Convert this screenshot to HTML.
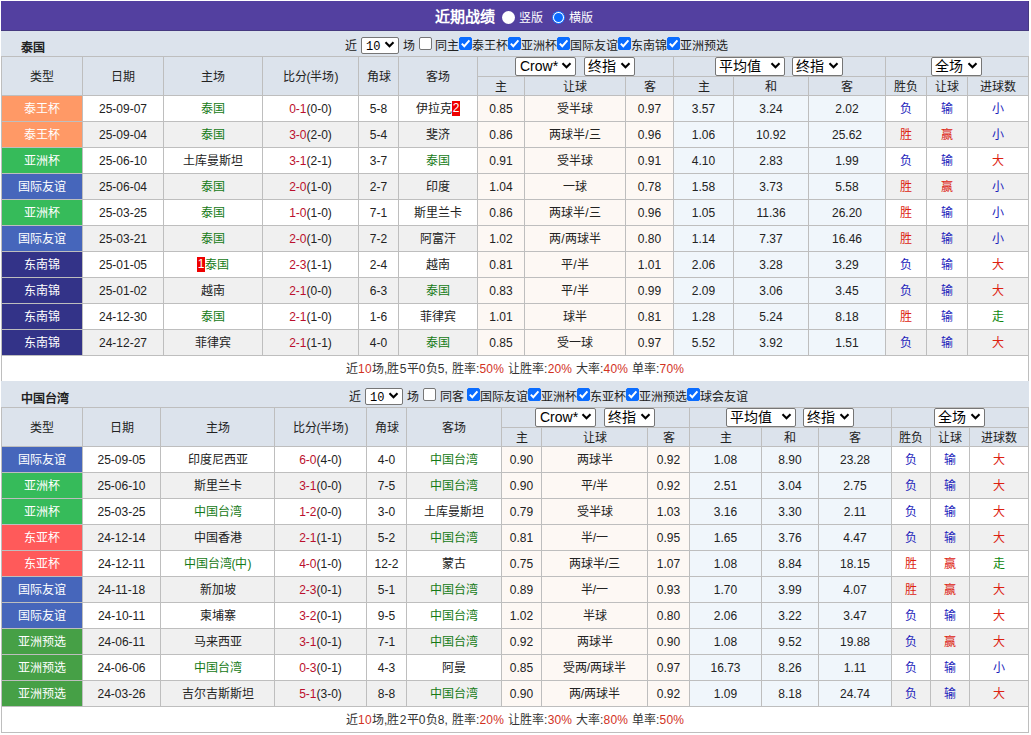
<!DOCTYPE html>
<html lang="zh-CN"><head><meta charset="utf-8"><style>
html,body{margin:0;padding:0;background:#fff;}
body{width:1031px;height:735px;position:relative;overflow:hidden;font-family:"Liberation Sans", sans-serif;font-size:12px;color:#222;}
body>div{position:absolute;box-sizing:border-box;}
.t{text-align:center;white-space:nowrap;overflow:visible;}
.sel{background:#fff;border:1px solid #767676;border-radius:2px;color:#000;white-space:nowrap;}
.cb{width:13px;height:13px;box-sizing:border-box;border:1px solid #767676;border-radius:2px;background:#fff;}
.cb.on{background:#0a6cff;border-color:#0a6cff;}
.cb svg{position:absolute;left:-1px;top:-1px;}
.rad{width:13px;height:13px;border-radius:50%;background:#fff;box-sizing:border-box;}
.rad.on{background:#fff;border:1px solid #0a6cff;}
.rad.on div{position:absolute;left:1px;top:1px;width:9px;height:9px;border-radius:50%;background:#0a6cff;}
.bd{display:inline-block;vertical-align:top;margin-top:4px;height:15px;line-height:15px;background:#e00;color:#fff;padding:0 0.5px;}
</style></head><body>
<div style="left:1px;top:1px;width:1028px;height:30px;background:#5340a0;border-right:1px solid #463a80;border-bottom:1px solid #463a80;"></div><div class="t" style="left:435px;top:2px;width:70px;height:30px;line-height:30px;color:#fff;font-weight:bold;font-size:15px;text-align:left;">近期战绩</div><div class="rad" style="left:502px;top:11px;width:13px;height:13px;"></div><div class="t" style="left:519px;top:3px;width:30px;height:30px;line-height:30px;color:#fff;font-size:12px;text-align:left;">竖版</div><div class="rad on" style="left:552px;top:11px;"><div></div></div><div class="t" style="left:569px;top:3px;width:30px;height:30px;line-height:30px;color:#fff;font-size:12px;text-align:left;">横版</div><div style="left:1px;top:31px;width:1028px;height:1px;background:#e6e6fa;"></div><div style="left:1px;top:31px;width:1028px;height:25px;background:#dce3ec;"></div><div class="t" style="left:21px;top:36px;width:80px;height:25px;line-height:25px;font-weight:bold;text-align:left;color:#222;">泰国</div><div class="t" style="left:345px;top:38px;width:14px;height:16px;line-height:16px;text-align:left;line-height:17px;">近</div><div class="sel" style="left:361px;top:37px;width:38px;height:17px;"><span style="position:absolute;left:4px;top:2px;font-family:'Liberation Mono', monospace;font-size:12px;line-height:15px;">10</span><svg style="position:absolute;right:3px;top:3px" width="11" height="7" viewBox="0 0 11 7"><path d="M1.5 1.3 L5.5 5.3 L9.5 1.3" fill="none" stroke="#000" stroke-width="2.1"/></svg></div><div class="t" style="left:403px;top:38px;width:14px;height:16px;line-height:16px;text-align:left;line-height:17px;">场</div><div class="cb" style="left:419px;top:37px;"></div><div class="t" style="left:435px;top:38px;width:26px;height:16px;line-height:16px;text-align:left;line-height:17px;">同主</div><div class="cb on" style="left:459px;top:37px;"><svg width="13" height="13" viewBox="0 0 13 13"><path d="M2.8 6.6 L5.3 9.2 L10.4 3.4" fill="none" stroke="#fff" stroke-width="2"/></svg></div><div class="t" style="left:472px;top:38px;width:38px;height:16px;line-height:16px;text-align:left;line-height:17px;">泰王杯</div><div class="cb on" style="left:508px;top:37px;"><svg width="13" height="13" viewBox="0 0 13 13"><path d="M2.8 6.6 L5.3 9.2 L10.4 3.4" fill="none" stroke="#fff" stroke-width="2"/></svg></div><div class="t" style="left:521px;top:38px;width:38px;height:16px;line-height:16px;text-align:left;line-height:17px;">亚洲杯</div><div class="cb on" style="left:557px;top:37px;"><svg width="13" height="13" viewBox="0 0 13 13"><path d="M2.8 6.6 L5.3 9.2 L10.4 3.4" fill="none" stroke="#fff" stroke-width="2"/></svg></div><div class="t" style="left:570px;top:38px;width:50px;height:16px;line-height:16px;text-align:left;line-height:17px;">国际友谊</div><div class="cb on" style="left:618px;top:37px;"><svg width="13" height="13" viewBox="0 0 13 13"><path d="M2.8 6.6 L5.3 9.2 L10.4 3.4" fill="none" stroke="#fff" stroke-width="2"/></svg></div><div class="t" style="left:631px;top:38px;width:38px;height:16px;line-height:16px;text-align:left;line-height:17px;">东南锦</div><div class="cb on" style="left:667px;top:37px;"><svg width="13" height="13" viewBox="0 0 13 13"><path d="M2.8 6.6 L5.3 9.2 L10.4 3.4" fill="none" stroke="#fff" stroke-width="2"/></svg></div><div class="t" style="left:680px;top:38px;width:50px;height:16px;line-height:16px;text-align:left;line-height:17px;">亚洲预选</div><div style="left:1px;top:56px;width:1028px;height:39px;background:#dce3ec;"></div><div style="left:1px;top:56px;width:1028px;height:1px;background:#bebebe;"></div><div style="left:477px;top:76px;width:551px;height:1px;background:#bebebe;"></div><div style="left:1px;top:95px;width:1028px;height:1px;background:#bebebe;"></div><div class="t" style="left:2px;top:58px;width:80px;height:38px;line-height:38px;">类型</div><div class="t" style="left:83px;top:58px;width:80px;height:38px;line-height:38px;">日期</div><div class="t" style="left:164px;top:58px;width:98px;height:38px;line-height:38px;">主场</div><div class="t" style="left:263px;top:58px;width:95px;height:38px;line-height:38px;">比分(半场)</div><div class="t" style="left:359px;top:58px;width:39px;height:38px;line-height:38px;">角球</div><div class="t" style="left:399px;top:58px;width:78px;height:38px;line-height:38px;">客场</div><div class="t" style="left:478px;top:78px;width:46px;height:18px;line-height:18px;">主</div><div class="t" style="left:525px;top:78px;width:100px;height:18px;line-height:18px;">让球</div><div class="t" style="left:626px;top:78px;width:47px;height:18px;line-height:18px;">客</div><div class="t" style="left:674px;top:78px;width:59px;height:18px;line-height:18px;">主</div><div class="t" style="left:734px;top:78px;width:74px;height:18px;line-height:18px;">和</div><div class="t" style="left:809px;top:78px;width:76px;height:18px;line-height:18px;">客</div><div class="t" style="left:886px;top:78px;width:40px;height:18px;line-height:18px;">胜负</div><div class="t" style="left:927px;top:78px;width:40px;height:18px;line-height:18px;">让球</div><div class="t" style="left:968px;top:78px;width:60px;height:18px;line-height:18px;">进球数</div><div style="left:1px;top:56px;width:1px;height:39px;background:#bebebe;"></div><div style="left:82px;top:56px;width:1px;height:39px;background:#bebebe;"></div><div style="left:163px;top:56px;width:1px;height:39px;background:#bebebe;"></div><div style="left:262px;top:56px;width:1px;height:39px;background:#bebebe;"></div><div style="left:358px;top:56px;width:1px;height:39px;background:#bebebe;"></div><div style="left:398px;top:56px;width:1px;height:39px;background:#bebebe;"></div><div style="left:477px;top:56px;width:1px;height:39px;background:#bebebe;"></div><div style="left:673px;top:56px;width:1px;height:39px;background:#bebebe;"></div><div style="left:885px;top:56px;width:1px;height:39px;background:#bebebe;"></div><div style="left:1028px;top:56px;width:1px;height:39px;background:#bebebe;"></div><div style="left:524px;top:76px;width:1px;height:19px;background:#bebebe;"></div><div style="left:625px;top:76px;width:1px;height:19px;background:#bebebe;"></div><div style="left:733px;top:76px;width:1px;height:19px;background:#bebebe;"></div><div style="left:808px;top:76px;width:1px;height:19px;background:#bebebe;"></div><div style="left:926px;top:76px;width:1px;height:19px;background:#bebebe;"></div><div style="left:967px;top:76px;width:1px;height:19px;background:#bebebe;"></div><div class="sel" style="left:515px;top:57px;width:61px;height:19px;"><span style="position:absolute;left:4px;top:0px;font-family:'Liberation Sans', sans-serif;font-size:14px;line-height:17px;">Crow*</span><svg style="position:absolute;right:3px;top:4px" width="11" height="7" viewBox="0 0 11 7"><path d="M1.5 1.3 L5.5 5.3 L9.5 1.3" fill="none" stroke="#000" stroke-width="2.1"/></svg></div><div class="sel" style="left:584px;top:57px;width:51px;height:19px;"><span style="position:absolute;left:3px;top:0px;font-family:'Liberation Sans', sans-serif;font-size:14px;line-height:17px;">终指</span><svg style="position:absolute;right:3px;top:4px" width="11" height="7" viewBox="0 0 11 7"><path d="M1.5 1.3 L5.5 5.3 L9.5 1.3" fill="none" stroke="#000" stroke-width="2.1"/></svg></div><div class="sel" style="left:715px;top:57px;width:70px;height:19px;"><span style="position:absolute;left:3px;top:0px;font-family:'Liberation Sans', sans-serif;font-size:14px;line-height:17px;">平均值</span><svg style="position:absolute;right:3px;top:4px" width="11" height="7" viewBox="0 0 11 7"><path d="M1.5 1.3 L5.5 5.3 L9.5 1.3" fill="none" stroke="#000" stroke-width="2.1"/></svg></div><div class="sel" style="left:792px;top:57px;width:51px;height:19px;"><span style="position:absolute;left:3px;top:0px;font-family:'Liberation Sans', sans-serif;font-size:14px;line-height:17px;">终指</span><svg style="position:absolute;right:3px;top:4px" width="11" height="7" viewBox="0 0 11 7"><path d="M1.5 1.3 L5.5 5.3 L9.5 1.3" fill="none" stroke="#000" stroke-width="2.1"/></svg></div><div class="sel" style="left:931px;top:57px;width:51px;height:19px;"><span style="position:absolute;left:3px;top:0px;font-family:'Liberation Sans', sans-serif;font-size:14px;line-height:17px;">全场</span><svg style="position:absolute;right:3px;top:4px" width="11" height="7" viewBox="0 0 11 7"><path d="M1.5 1.3 L5.5 5.3 L9.5 1.3" fill="none" stroke="#000" stroke-width="2.1"/></svg></div><div style="left:1px;top:96px;width:1028px;height:25px;background:#fff;"></div><div style="left:478px;top:96px;width:195px;height:25px;background:#fdf8f4;"></div><div style="left:674px;top:96px;width:211px;height:25px;background:#f0f6fb;"></div><div style="left:2px;top:96px;width:80px;height:25px;background:#ff9966;"></div><div class="t" style="left:2px;top:97px;width:80px;height:25px;line-height:25px;color:#fff;">泰王杯</div><div class="t" style="left:83px;top:97px;width:80px;height:25px;line-height:25px;">25-09-07</div><div class="t" style="left:164px;top:97px;width:98px;height:25px;line-height:25px;"><span style="color:#157a15">泰国</span></div><div class="t" style="left:263px;top:97px;width:95px;height:25px;line-height:25px;"><span style="color:#bb0f2d">0-1</span>(0-0)</div><div class="t" style="left:359px;top:97px;width:39px;height:25px;line-height:25px;">5-8</div><div class="t" style="left:399px;top:97px;width:78px;height:25px;line-height:25px;">伊拉克<span class="bd">2</span></div><div class="t" style="left:478px;top:97px;width:46px;height:25px;line-height:25px;">0.85</div><div class="t" style="left:525px;top:97px;width:100px;height:25px;line-height:25px;">受半球</div><div class="t" style="left:626px;top:97px;width:47px;height:25px;line-height:25px;">0.97</div><div class="t" style="left:674px;top:97px;width:59px;height:25px;line-height:25px;">3.57</div><div class="t" style="left:734px;top:97px;width:74px;height:25px;line-height:25px;">3.24</div><div class="t" style="left:809px;top:97px;width:76px;height:25px;line-height:25px;">2.02</div><div class="t" style="left:886px;top:97px;width:40px;height:25px;line-height:25px;"><span style="color:#1c1cbb">负</span></div><div class="t" style="left:927px;top:97px;width:40px;height:25px;line-height:25px;"><span style="color:#1c1cbb">输</span></div><div class="t" style="left:968px;top:97px;width:60px;height:25px;line-height:25px;"><span style="color:#1c1cbb">小</span></div><div style="left:1px;top:121px;width:1028px;height:1px;background:#bebebe;"></div><div style="left:1px;top:122px;width:1028px;height:25px;background:#f0f0f0;"></div><div style="left:478px;top:122px;width:195px;height:25px;background:#fdf8f4;"></div><div style="left:674px;top:122px;width:211px;height:25px;background:#f0f6fb;"></div><div style="left:2px;top:122px;width:80px;height:25px;background:#ff9966;"></div><div class="t" style="left:2px;top:123px;width:80px;height:25px;line-height:25px;color:#fff;">泰王杯</div><div class="t" style="left:83px;top:123px;width:80px;height:25px;line-height:25px;">25-09-04</div><div class="t" style="left:164px;top:123px;width:98px;height:25px;line-height:25px;"><span style="color:#157a15">泰国</span></div><div class="t" style="left:263px;top:123px;width:95px;height:25px;line-height:25px;"><span style="color:#bb0f2d">3-0</span>(2-0)</div><div class="t" style="left:359px;top:123px;width:39px;height:25px;line-height:25px;">5-4</div><div class="t" style="left:399px;top:123px;width:78px;height:25px;line-height:25px;">斐济</div><div class="t" style="left:478px;top:123px;width:46px;height:25px;line-height:25px;">0.86</div><div class="t" style="left:525px;top:123px;width:100px;height:25px;line-height:25px;">两球半/三</div><div class="t" style="left:626px;top:123px;width:47px;height:25px;line-height:25px;">0.96</div><div class="t" style="left:674px;top:123px;width:59px;height:25px;line-height:25px;">1.06</div><div class="t" style="left:734px;top:123px;width:74px;height:25px;line-height:25px;">10.92</div><div class="t" style="left:809px;top:123px;width:76px;height:25px;line-height:25px;">25.62</div><div class="t" style="left:886px;top:123px;width:40px;height:25px;line-height:25px;"><span style="color:#dd2211">胜</span></div><div class="t" style="left:927px;top:123px;width:40px;height:25px;line-height:25px;"><span style="color:#dd2211">赢</span></div><div class="t" style="left:968px;top:123px;width:60px;height:25px;line-height:25px;"><span style="color:#1c1cbb">小</span></div><div style="left:1px;top:147px;width:1028px;height:1px;background:#bebebe;"></div><div style="left:1px;top:148px;width:1028px;height:25px;background:#fff;"></div><div style="left:478px;top:148px;width:195px;height:25px;background:#fdf8f4;"></div><div style="left:674px;top:148px;width:211px;height:25px;background:#f0f6fb;"></div><div style="left:2px;top:148px;width:80px;height:25px;background:#36bb5a;"></div><div class="t" style="left:2px;top:149px;width:80px;height:25px;line-height:25px;color:#fff;">亚洲杯</div><div class="t" style="left:83px;top:149px;width:80px;height:25px;line-height:25px;">25-06-10</div><div class="t" style="left:164px;top:149px;width:98px;height:25px;line-height:25px;">土库曼斯坦</div><div class="t" style="left:263px;top:149px;width:95px;height:25px;line-height:25px;"><span style="color:#bb0f2d">3-1</span>(2-1)</div><div class="t" style="left:359px;top:149px;width:39px;height:25px;line-height:25px;">3-7</div><div class="t" style="left:399px;top:149px;width:78px;height:25px;line-height:25px;"><span style="color:#157a15">泰国</span></div><div class="t" style="left:478px;top:149px;width:46px;height:25px;line-height:25px;">0.91</div><div class="t" style="left:525px;top:149px;width:100px;height:25px;line-height:25px;">受半球</div><div class="t" style="left:626px;top:149px;width:47px;height:25px;line-height:25px;">0.91</div><div class="t" style="left:674px;top:149px;width:59px;height:25px;line-height:25px;">4.10</div><div class="t" style="left:734px;top:149px;width:74px;height:25px;line-height:25px;">2.83</div><div class="t" style="left:809px;top:149px;width:76px;height:25px;line-height:25px;">1.99</div><div class="t" style="left:886px;top:149px;width:40px;height:25px;line-height:25px;"><span style="color:#1c1cbb">负</span></div><div class="t" style="left:927px;top:149px;width:40px;height:25px;line-height:25px;"><span style="color:#1c1cbb">输</span></div><div class="t" style="left:968px;top:149px;width:60px;height:25px;line-height:25px;"><span style="color:#dd2211">大</span></div><div style="left:1px;top:173px;width:1028px;height:1px;background:#bebebe;"></div><div style="left:1px;top:174px;width:1028px;height:25px;background:#f0f0f0;"></div><div style="left:478px;top:174px;width:195px;height:25px;background:#fdf8f4;"></div><div style="left:674px;top:174px;width:211px;height:25px;background:#f0f6fb;"></div><div style="left:2px;top:174px;width:80px;height:25px;background:#4666bb;"></div><div class="t" style="left:2px;top:175px;width:80px;height:25px;line-height:25px;color:#fff;">国际友谊</div><div class="t" style="left:83px;top:175px;width:80px;height:25px;line-height:25px;">25-06-04</div><div class="t" style="left:164px;top:175px;width:98px;height:25px;line-height:25px;"><span style="color:#157a15">泰国</span></div><div class="t" style="left:263px;top:175px;width:95px;height:25px;line-height:25px;"><span style="color:#bb0f2d">2-0</span>(1-0)</div><div class="t" style="left:359px;top:175px;width:39px;height:25px;line-height:25px;">2-7</div><div class="t" style="left:399px;top:175px;width:78px;height:25px;line-height:25px;">印度</div><div class="t" style="left:478px;top:175px;width:46px;height:25px;line-height:25px;">1.04</div><div class="t" style="left:525px;top:175px;width:100px;height:25px;line-height:25px;">一球</div><div class="t" style="left:626px;top:175px;width:47px;height:25px;line-height:25px;">0.78</div><div class="t" style="left:674px;top:175px;width:59px;height:25px;line-height:25px;">1.58</div><div class="t" style="left:734px;top:175px;width:74px;height:25px;line-height:25px;">3.73</div><div class="t" style="left:809px;top:175px;width:76px;height:25px;line-height:25px;">5.58</div><div class="t" style="left:886px;top:175px;width:40px;height:25px;line-height:25px;"><span style="color:#dd2211">胜</span></div><div class="t" style="left:927px;top:175px;width:40px;height:25px;line-height:25px;"><span style="color:#dd2211">赢</span></div><div class="t" style="left:968px;top:175px;width:60px;height:25px;line-height:25px;"><span style="color:#1c1cbb">小</span></div><div style="left:1px;top:199px;width:1028px;height:1px;background:#bebebe;"></div><div style="left:1px;top:200px;width:1028px;height:25px;background:#fff;"></div><div style="left:478px;top:200px;width:195px;height:25px;background:#fdf8f4;"></div><div style="left:674px;top:200px;width:211px;height:25px;background:#f0f6fb;"></div><div style="left:2px;top:200px;width:80px;height:25px;background:#36bb5a;"></div><div class="t" style="left:2px;top:201px;width:80px;height:25px;line-height:25px;color:#fff;">亚洲杯</div><div class="t" style="left:83px;top:201px;width:80px;height:25px;line-height:25px;">25-03-25</div><div class="t" style="left:164px;top:201px;width:98px;height:25px;line-height:25px;"><span style="color:#157a15">泰国</span></div><div class="t" style="left:263px;top:201px;width:95px;height:25px;line-height:25px;"><span style="color:#bb0f2d">1-0</span>(1-0)</div><div class="t" style="left:359px;top:201px;width:39px;height:25px;line-height:25px;">7-1</div><div class="t" style="left:399px;top:201px;width:78px;height:25px;line-height:25px;">斯里兰卡</div><div class="t" style="left:478px;top:201px;width:46px;height:25px;line-height:25px;">0.86</div><div class="t" style="left:525px;top:201px;width:100px;height:25px;line-height:25px;">两球半/三</div><div class="t" style="left:626px;top:201px;width:47px;height:25px;line-height:25px;">0.96</div><div class="t" style="left:674px;top:201px;width:59px;height:25px;line-height:25px;">1.05</div><div class="t" style="left:734px;top:201px;width:74px;height:25px;line-height:25px;">11.36</div><div class="t" style="left:809px;top:201px;width:76px;height:25px;line-height:25px;">26.20</div><div class="t" style="left:886px;top:201px;width:40px;height:25px;line-height:25px;"><span style="color:#dd2211">胜</span></div><div class="t" style="left:927px;top:201px;width:40px;height:25px;line-height:25px;"><span style="color:#1c1cbb">输</span></div><div class="t" style="left:968px;top:201px;width:60px;height:25px;line-height:25px;"><span style="color:#1c1cbb">小</span></div><div style="left:1px;top:225px;width:1028px;height:1px;background:#bebebe;"></div><div style="left:1px;top:226px;width:1028px;height:25px;background:#f0f0f0;"></div><div style="left:478px;top:226px;width:195px;height:25px;background:#fdf8f4;"></div><div style="left:674px;top:226px;width:211px;height:25px;background:#f0f6fb;"></div><div style="left:2px;top:226px;width:80px;height:25px;background:#4666bb;"></div><div class="t" style="left:2px;top:227px;width:80px;height:25px;line-height:25px;color:#fff;">国际友谊</div><div class="t" style="left:83px;top:227px;width:80px;height:25px;line-height:25px;">25-03-21</div><div class="t" style="left:164px;top:227px;width:98px;height:25px;line-height:25px;"><span style="color:#157a15">泰国</span></div><div class="t" style="left:263px;top:227px;width:95px;height:25px;line-height:25px;"><span style="color:#bb0f2d">2-0</span>(1-0)</div><div class="t" style="left:359px;top:227px;width:39px;height:25px;line-height:25px;">7-2</div><div class="t" style="left:399px;top:227px;width:78px;height:25px;line-height:25px;">阿富汗</div><div class="t" style="left:478px;top:227px;width:46px;height:25px;line-height:25px;">1.02</div><div class="t" style="left:525px;top:227px;width:100px;height:25px;line-height:25px;">两/两球半</div><div class="t" style="left:626px;top:227px;width:47px;height:25px;line-height:25px;">0.80</div><div class="t" style="left:674px;top:227px;width:59px;height:25px;line-height:25px;">1.14</div><div class="t" style="left:734px;top:227px;width:74px;height:25px;line-height:25px;">7.37</div><div class="t" style="left:809px;top:227px;width:76px;height:25px;line-height:25px;">16.46</div><div class="t" style="left:886px;top:227px;width:40px;height:25px;line-height:25px;"><span style="color:#dd2211">胜</span></div><div class="t" style="left:927px;top:227px;width:40px;height:25px;line-height:25px;"><span style="color:#1c1cbb">输</span></div><div class="t" style="left:968px;top:227px;width:60px;height:25px;line-height:25px;"><span style="color:#1c1cbb">小</span></div><div style="left:1px;top:251px;width:1028px;height:1px;background:#bebebe;"></div><div style="left:1px;top:252px;width:1028px;height:25px;background:#fff;"></div><div style="left:478px;top:252px;width:195px;height:25px;background:#fdf8f4;"></div><div style="left:674px;top:252px;width:211px;height:25px;background:#f0f6fb;"></div><div style="left:2px;top:252px;width:80px;height:25px;background:#333388;"></div><div class="t" style="left:2px;top:253px;width:80px;height:25px;line-height:25px;color:#fff;">东南锦</div><div class="t" style="left:83px;top:253px;width:80px;height:25px;line-height:25px;">25-01-05</div><div class="t" style="left:164px;top:253px;width:98px;height:25px;line-height:25px;"><span class="bd">1</span><span style="color:#157a15">泰国</span></div><div class="t" style="left:263px;top:253px;width:95px;height:25px;line-height:25px;"><span style="color:#bb0f2d">2-3</span>(1-1)</div><div class="t" style="left:359px;top:253px;width:39px;height:25px;line-height:25px;">2-4</div><div class="t" style="left:399px;top:253px;width:78px;height:25px;line-height:25px;">越南</div><div class="t" style="left:478px;top:253px;width:46px;height:25px;line-height:25px;">0.81</div><div class="t" style="left:525px;top:253px;width:100px;height:25px;line-height:25px;">平/半</div><div class="t" style="left:626px;top:253px;width:47px;height:25px;line-height:25px;">1.01</div><div class="t" style="left:674px;top:253px;width:59px;height:25px;line-height:25px;">2.06</div><div class="t" style="left:734px;top:253px;width:74px;height:25px;line-height:25px;">3.28</div><div class="t" style="left:809px;top:253px;width:76px;height:25px;line-height:25px;">3.29</div><div class="t" style="left:886px;top:253px;width:40px;height:25px;line-height:25px;"><span style="color:#1c1cbb">负</span></div><div class="t" style="left:927px;top:253px;width:40px;height:25px;line-height:25px;"><span style="color:#1c1cbb">输</span></div><div class="t" style="left:968px;top:253px;width:60px;height:25px;line-height:25px;"><span style="color:#dd2211">大</span></div><div style="left:1px;top:277px;width:1028px;height:1px;background:#bebebe;"></div><div style="left:1px;top:278px;width:1028px;height:25px;background:#f0f0f0;"></div><div style="left:478px;top:278px;width:195px;height:25px;background:#fdf8f4;"></div><div style="left:674px;top:278px;width:211px;height:25px;background:#f0f6fb;"></div><div style="left:2px;top:278px;width:80px;height:25px;background:#333388;"></div><div class="t" style="left:2px;top:279px;width:80px;height:25px;line-height:25px;color:#fff;">东南锦</div><div class="t" style="left:83px;top:279px;width:80px;height:25px;line-height:25px;">25-01-02</div><div class="t" style="left:164px;top:279px;width:98px;height:25px;line-height:25px;">越南</div><div class="t" style="left:263px;top:279px;width:95px;height:25px;line-height:25px;"><span style="color:#bb0f2d">2-1</span>(0-0)</div><div class="t" style="left:359px;top:279px;width:39px;height:25px;line-height:25px;">6-3</div><div class="t" style="left:399px;top:279px;width:78px;height:25px;line-height:25px;"><span style="color:#157a15">泰国</span></div><div class="t" style="left:478px;top:279px;width:46px;height:25px;line-height:25px;">0.83</div><div class="t" style="left:525px;top:279px;width:100px;height:25px;line-height:25px;">平/半</div><div class="t" style="left:626px;top:279px;width:47px;height:25px;line-height:25px;">0.99</div><div class="t" style="left:674px;top:279px;width:59px;height:25px;line-height:25px;">2.09</div><div class="t" style="left:734px;top:279px;width:74px;height:25px;line-height:25px;">3.06</div><div class="t" style="left:809px;top:279px;width:76px;height:25px;line-height:25px;">3.45</div><div class="t" style="left:886px;top:279px;width:40px;height:25px;line-height:25px;"><span style="color:#1c1cbb">负</span></div><div class="t" style="left:927px;top:279px;width:40px;height:25px;line-height:25px;"><span style="color:#1c1cbb">输</span></div><div class="t" style="left:968px;top:279px;width:60px;height:25px;line-height:25px;"><span style="color:#dd2211">大</span></div><div style="left:1px;top:303px;width:1028px;height:1px;background:#bebebe;"></div><div style="left:1px;top:304px;width:1028px;height:25px;background:#fff;"></div><div style="left:478px;top:304px;width:195px;height:25px;background:#fdf8f4;"></div><div style="left:674px;top:304px;width:211px;height:25px;background:#f0f6fb;"></div><div style="left:2px;top:304px;width:80px;height:25px;background:#333388;"></div><div class="t" style="left:2px;top:305px;width:80px;height:25px;line-height:25px;color:#fff;">东南锦</div><div class="t" style="left:83px;top:305px;width:80px;height:25px;line-height:25px;">24-12-30</div><div class="t" style="left:164px;top:305px;width:98px;height:25px;line-height:25px;"><span style="color:#157a15">泰国</span></div><div class="t" style="left:263px;top:305px;width:95px;height:25px;line-height:25px;"><span style="color:#bb0f2d">2-1</span>(1-0)</div><div class="t" style="left:359px;top:305px;width:39px;height:25px;line-height:25px;">1-6</div><div class="t" style="left:399px;top:305px;width:78px;height:25px;line-height:25px;">菲律宾</div><div class="t" style="left:478px;top:305px;width:46px;height:25px;line-height:25px;">1.01</div><div class="t" style="left:525px;top:305px;width:100px;height:25px;line-height:25px;">球半</div><div class="t" style="left:626px;top:305px;width:47px;height:25px;line-height:25px;">0.81</div><div class="t" style="left:674px;top:305px;width:59px;height:25px;line-height:25px;">1.28</div><div class="t" style="left:734px;top:305px;width:74px;height:25px;line-height:25px;">5.24</div><div class="t" style="left:809px;top:305px;width:76px;height:25px;line-height:25px;">8.18</div><div class="t" style="left:886px;top:305px;width:40px;height:25px;line-height:25px;"><span style="color:#dd2211">胜</span></div><div class="t" style="left:927px;top:305px;width:40px;height:25px;line-height:25px;"><span style="color:#1c1cbb">输</span></div><div class="t" style="left:968px;top:305px;width:60px;height:25px;line-height:25px;"><span style="color:#118811">走</span></div><div style="left:1px;top:329px;width:1028px;height:1px;background:#bebebe;"></div><div style="left:1px;top:330px;width:1028px;height:25px;background:#f0f0f0;"></div><div style="left:478px;top:330px;width:195px;height:25px;background:#fdf8f4;"></div><div style="left:674px;top:330px;width:211px;height:25px;background:#f0f6fb;"></div><div style="left:2px;top:330px;width:80px;height:25px;background:#333388;"></div><div class="t" style="left:2px;top:331px;width:80px;height:25px;line-height:25px;color:#fff;">东南锦</div><div class="t" style="left:83px;top:331px;width:80px;height:25px;line-height:25px;">24-12-27</div><div class="t" style="left:164px;top:331px;width:98px;height:25px;line-height:25px;">菲律宾</div><div class="t" style="left:263px;top:331px;width:95px;height:25px;line-height:25px;"><span style="color:#bb0f2d">2-1</span>(1-1)</div><div class="t" style="left:359px;top:331px;width:39px;height:25px;line-height:25px;">4-0</div><div class="t" style="left:399px;top:331px;width:78px;height:25px;line-height:25px;"><span style="color:#157a15">泰国</span></div><div class="t" style="left:478px;top:331px;width:46px;height:25px;line-height:25px;">0.85</div><div class="t" style="left:525px;top:331px;width:100px;height:25px;line-height:25px;">受一球</div><div class="t" style="left:626px;top:331px;width:47px;height:25px;line-height:25px;">0.97</div><div class="t" style="left:674px;top:331px;width:59px;height:25px;line-height:25px;">5.52</div><div class="t" style="left:734px;top:331px;width:74px;height:25px;line-height:25px;">3.92</div><div class="t" style="left:809px;top:331px;width:76px;height:25px;line-height:25px;">1.51</div><div class="t" style="left:886px;top:331px;width:40px;height:25px;line-height:25px;"><span style="color:#1c1cbb">负</span></div><div class="t" style="left:927px;top:331px;width:40px;height:25px;line-height:25px;"><span style="color:#1c1cbb">输</span></div><div class="t" style="left:968px;top:331px;width:60px;height:25px;line-height:25px;"><span style="color:#dd2211">大</span></div><div style="left:1px;top:355px;width:1028px;height:1px;background:#bebebe;"></div><div style="left:1px;top:95px;width:1px;height:260px;background:#bebebe;"></div><div style="left:82px;top:95px;width:1px;height:260px;background:#bebebe;"></div><div style="left:163px;top:95px;width:1px;height:260px;background:#bebebe;"></div><div style="left:262px;top:95px;width:1px;height:260px;background:#bebebe;"></div><div style="left:358px;top:95px;width:1px;height:260px;background:#bebebe;"></div><div style="left:398px;top:95px;width:1px;height:260px;background:#bebebe;"></div><div style="left:477px;top:95px;width:1px;height:260px;background:#bebebe;"></div><div style="left:524px;top:95px;width:1px;height:260px;background:#bebebe;"></div><div style="left:625px;top:95px;width:1px;height:260px;background:#bebebe;"></div><div style="left:673px;top:95px;width:1px;height:260px;background:#bebebe;"></div><div style="left:733px;top:95px;width:1px;height:260px;background:#bebebe;"></div><div style="left:808px;top:95px;width:1px;height:260px;background:#bebebe;"></div><div style="left:885px;top:95px;width:1px;height:260px;background:#bebebe;"></div><div style="left:926px;top:95px;width:1px;height:260px;background:#bebebe;"></div><div style="left:967px;top:95px;width:1px;height:260px;background:#bebebe;"></div><div style="left:1028px;top:95px;width:1px;height:260px;background:#bebebe;"></div><div style="left:1px;top:356px;width:1028px;height:25px;background:#fff;"></div><div class="t" style="left:2px;top:357px;width:1026px;height:25px;line-height:25px;color:#333;letter-spacing:0.18px;">近<span style="color:#d2321e">10</span>场,胜5平0负5, 胜率:<span style="color:#d2321e">50%</span> 让胜率:<span style="color:#d2321e">20%</span> 大率:<span style="color:#d2321e">40%</span> 单率:<span style="color:#d2321e">70%</span></div><div style="left:1px;top:355px;width:1px;height:26px;background:#bebebe;"></div><div style="left:1028px;top:355px;width:1px;height:26px;background:#bebebe;"></div><div style="left:1px;top:381px;width:1028px;height:1px;background:#bebebe;"></div><div style="left:1px;top:381px;width:1028px;height:26px;background:#dce3ec;"></div><div class="t" style="left:21px;top:386px;width:80px;height:26px;line-height:26px;font-weight:bold;text-align:left;color:#222;">中国台湾</div><div class="t" style="left:349px;top:389px;width:14px;height:16px;line-height:16px;text-align:left;line-height:17px;">近</div><div class="sel" style="left:365px;top:388px;width:38px;height:17px;"><span style="position:absolute;left:4px;top:2px;font-family:'Liberation Mono', monospace;font-size:12px;line-height:15px;">10</span><svg style="position:absolute;right:3px;top:3px" width="11" height="7" viewBox="0 0 11 7"><path d="M1.5 1.3 L5.5 5.3 L9.5 1.3" fill="none" stroke="#000" stroke-width="2.1"/></svg></div><div class="t" style="left:407px;top:389px;width:14px;height:16px;line-height:16px;text-align:left;line-height:17px;">场</div><div class="cb" style="left:423px;top:388px;"></div><div class="t" style="left:440px;top:389px;width:26px;height:16px;line-height:16px;text-align:left;line-height:17px;">同客</div><div class="cb on" style="left:467px;top:388px;"><svg width="13" height="13" viewBox="0 0 13 13"><path d="M2.8 6.6 L5.3 9.2 L10.4 3.4" fill="none" stroke="#fff" stroke-width="2"/></svg></div><div class="t" style="left:480px;top:389px;width:50px;height:16px;line-height:16px;text-align:left;line-height:17px;">国际友谊</div><div class="cb on" style="left:528px;top:388px;"><svg width="13" height="13" viewBox="0 0 13 13"><path d="M2.8 6.6 L5.3 9.2 L10.4 3.4" fill="none" stroke="#fff" stroke-width="2"/></svg></div><div class="t" style="left:541px;top:389px;width:38px;height:16px;line-height:16px;text-align:left;line-height:17px;">亚洲杯</div><div class="cb on" style="left:577px;top:388px;"><svg width="13" height="13" viewBox="0 0 13 13"><path d="M2.8 6.6 L5.3 9.2 L10.4 3.4" fill="none" stroke="#fff" stroke-width="2"/></svg></div><div class="t" style="left:590px;top:389px;width:38px;height:16px;line-height:16px;text-align:left;line-height:17px;">东亚杯</div><div class="cb on" style="left:626px;top:388px;"><svg width="13" height="13" viewBox="0 0 13 13"><path d="M2.8 6.6 L5.3 9.2 L10.4 3.4" fill="none" stroke="#fff" stroke-width="2"/></svg></div><div class="t" style="left:639px;top:389px;width:50px;height:16px;line-height:16px;text-align:left;line-height:17px;">亚洲预选</div><div class="cb on" style="left:687px;top:388px;"><svg width="13" height="13" viewBox="0 0 13 13"><path d="M2.8 6.6 L5.3 9.2 L10.4 3.4" fill="none" stroke="#fff" stroke-width="2"/></svg></div><div class="t" style="left:700px;top:389px;width:50px;height:16px;line-height:16px;text-align:left;line-height:17px;">球会友谊</div><div style="left:1px;top:407px;width:1028px;height:39px;background:#dce3ec;"></div><div style="left:1px;top:407px;width:1028px;height:1px;background:#bebebe;"></div><div style="left:501px;top:427px;width:527px;height:1px;background:#bebebe;"></div><div style="left:1px;top:446px;width:1028px;height:1px;background:#bebebe;"></div><div class="t" style="left:2px;top:409px;width:80px;height:38px;line-height:38px;">类型</div><div class="t" style="left:83px;top:409px;width:77px;height:38px;line-height:38px;">日期</div><div class="t" style="left:161px;top:409px;width:113px;height:38px;line-height:38px;">主场</div><div class="t" style="left:275px;top:409px;width:91px;height:38px;line-height:38px;">比分(半场)</div><div class="t" style="left:367px;top:409px;width:39px;height:38px;line-height:38px;">角球</div><div class="t" style="left:407px;top:409px;width:94px;height:38px;line-height:38px;">客场</div><div class="t" style="left:502px;top:429px;width:39px;height:18px;line-height:18px;">主</div><div class="t" style="left:542px;top:429px;width:105px;height:18px;line-height:18px;">让球</div><div class="t" style="left:648px;top:429px;width:41px;height:18px;line-height:18px;">客</div><div class="t" style="left:690px;top:429px;width:71px;height:18px;line-height:18px;">主</div><div class="t" style="left:762px;top:429px;width:56px;height:18px;line-height:18px;">和</div><div class="t" style="left:819px;top:429px;width:72px;height:18px;line-height:18px;">客</div><div class="t" style="left:892px;top:429px;width:38px;height:18px;line-height:18px;">胜负</div><div class="t" style="left:931px;top:429px;width:38px;height:18px;line-height:18px;">让球</div><div class="t" style="left:970px;top:429px;width:58px;height:18px;line-height:18px;">进球数</div><div style="left:1px;top:407px;width:1px;height:39px;background:#bebebe;"></div><div style="left:82px;top:407px;width:1px;height:39px;background:#bebebe;"></div><div style="left:160px;top:407px;width:1px;height:39px;background:#bebebe;"></div><div style="left:274px;top:407px;width:1px;height:39px;background:#bebebe;"></div><div style="left:366px;top:407px;width:1px;height:39px;background:#bebebe;"></div><div style="left:406px;top:407px;width:1px;height:39px;background:#bebebe;"></div><div style="left:501px;top:407px;width:1px;height:39px;background:#bebebe;"></div><div style="left:689px;top:407px;width:1px;height:39px;background:#bebebe;"></div><div style="left:891px;top:407px;width:1px;height:39px;background:#bebebe;"></div><div style="left:1028px;top:407px;width:1px;height:39px;background:#bebebe;"></div><div style="left:541px;top:427px;width:1px;height:19px;background:#bebebe;"></div><div style="left:647px;top:427px;width:1px;height:19px;background:#bebebe;"></div><div style="left:761px;top:427px;width:1px;height:19px;background:#bebebe;"></div><div style="left:818px;top:427px;width:1px;height:19px;background:#bebebe;"></div><div style="left:930px;top:427px;width:1px;height:19px;background:#bebebe;"></div><div style="left:969px;top:427px;width:1px;height:19px;background:#bebebe;"></div><div class="sel" style="left:535px;top:408px;width:61px;height:19px;"><span style="position:absolute;left:4px;top:0px;font-family:'Liberation Sans', sans-serif;font-size:14px;line-height:17px;">Crow*</span><svg style="position:absolute;right:3px;top:4px" width="11" height="7" viewBox="0 0 11 7"><path d="M1.5 1.3 L5.5 5.3 L9.5 1.3" fill="none" stroke="#000" stroke-width="2.1"/></svg></div><div class="sel" style="left:604px;top:408px;width:51px;height:19px;"><span style="position:absolute;left:3px;top:0px;font-family:'Liberation Sans', sans-serif;font-size:14px;line-height:17px;">终指</span><svg style="position:absolute;right:3px;top:4px" width="11" height="7" viewBox="0 0 11 7"><path d="M1.5 1.3 L5.5 5.3 L9.5 1.3" fill="none" stroke="#000" stroke-width="2.1"/></svg></div><div class="sel" style="left:726px;top:408px;width:70px;height:19px;"><span style="position:absolute;left:3px;top:0px;font-family:'Liberation Sans', sans-serif;font-size:14px;line-height:17px;">平均值</span><svg style="position:absolute;right:3px;top:4px" width="11" height="7" viewBox="0 0 11 7"><path d="M1.5 1.3 L5.5 5.3 L9.5 1.3" fill="none" stroke="#000" stroke-width="2.1"/></svg></div><div class="sel" style="left:803px;top:408px;width:51px;height:19px;"><span style="position:absolute;left:3px;top:0px;font-family:'Liberation Sans', sans-serif;font-size:14px;line-height:17px;">终指</span><svg style="position:absolute;right:3px;top:4px" width="11" height="7" viewBox="0 0 11 7"><path d="M1.5 1.3 L5.5 5.3 L9.5 1.3" fill="none" stroke="#000" stroke-width="2.1"/></svg></div><div class="sel" style="left:934px;top:408px;width:51px;height:19px;"><span style="position:absolute;left:3px;top:0px;font-family:'Liberation Sans', sans-serif;font-size:14px;line-height:17px;">全场</span><svg style="position:absolute;right:3px;top:4px" width="11" height="7" viewBox="0 0 11 7"><path d="M1.5 1.3 L5.5 5.3 L9.5 1.3" fill="none" stroke="#000" stroke-width="2.1"/></svg></div><div style="left:1px;top:447px;width:1028px;height:25px;background:#fff;"></div><div style="left:502px;top:447px;width:187px;height:25px;background:#fdf8f4;"></div><div style="left:690px;top:447px;width:201px;height:25px;background:#f0f6fb;"></div><div style="left:2px;top:447px;width:80px;height:25px;background:#4666bb;"></div><div class="t" style="left:2px;top:448px;width:80px;height:25px;line-height:25px;color:#fff;">国际友谊</div><div class="t" style="left:83px;top:448px;width:77px;height:25px;line-height:25px;">25-09-05</div><div class="t" style="left:161px;top:448px;width:113px;height:25px;line-height:25px;">印度尼西亚</div><div class="t" style="left:275px;top:448px;width:91px;height:25px;line-height:25px;"><span style="color:#bb0f2d">6-0</span>(4-0)</div><div class="t" style="left:367px;top:448px;width:39px;height:25px;line-height:25px;">4-0</div><div class="t" style="left:407px;top:448px;width:94px;height:25px;line-height:25px;"><span style="color:#157a15">中国台湾</span></div><div class="t" style="left:502px;top:448px;width:39px;height:25px;line-height:25px;">0.90</div><div class="t" style="left:542px;top:448px;width:105px;height:25px;line-height:25px;">两球半</div><div class="t" style="left:648px;top:448px;width:41px;height:25px;line-height:25px;">0.92</div><div class="t" style="left:690px;top:448px;width:71px;height:25px;line-height:25px;">1.08</div><div class="t" style="left:762px;top:448px;width:56px;height:25px;line-height:25px;">8.90</div><div class="t" style="left:819px;top:448px;width:72px;height:25px;line-height:25px;">23.28</div><div class="t" style="left:892px;top:448px;width:38px;height:25px;line-height:25px;"><span style="color:#1c1cbb">负</span></div><div class="t" style="left:931px;top:448px;width:38px;height:25px;line-height:25px;"><span style="color:#1c1cbb">输</span></div><div class="t" style="left:970px;top:448px;width:58px;height:25px;line-height:25px;"><span style="color:#dd2211">大</span></div><div style="left:1px;top:472px;width:1028px;height:1px;background:#bebebe;"></div><div style="left:1px;top:473px;width:1028px;height:25px;background:#f0f0f0;"></div><div style="left:502px;top:473px;width:187px;height:25px;background:#fdf8f4;"></div><div style="left:690px;top:473px;width:201px;height:25px;background:#f0f6fb;"></div><div style="left:2px;top:473px;width:80px;height:25px;background:#36bb5a;"></div><div class="t" style="left:2px;top:474px;width:80px;height:25px;line-height:25px;color:#fff;">亚洲杯</div><div class="t" style="left:83px;top:474px;width:77px;height:25px;line-height:25px;">25-06-10</div><div class="t" style="left:161px;top:474px;width:113px;height:25px;line-height:25px;">斯里兰卡</div><div class="t" style="left:275px;top:474px;width:91px;height:25px;line-height:25px;"><span style="color:#bb0f2d">3-1</span>(0-0)</div><div class="t" style="left:367px;top:474px;width:39px;height:25px;line-height:25px;">7-5</div><div class="t" style="left:407px;top:474px;width:94px;height:25px;line-height:25px;"><span style="color:#157a15">中国台湾</span></div><div class="t" style="left:502px;top:474px;width:39px;height:25px;line-height:25px;">0.90</div><div class="t" style="left:542px;top:474px;width:105px;height:25px;line-height:25px;">平/半</div><div class="t" style="left:648px;top:474px;width:41px;height:25px;line-height:25px;">0.92</div><div class="t" style="left:690px;top:474px;width:71px;height:25px;line-height:25px;">2.51</div><div class="t" style="left:762px;top:474px;width:56px;height:25px;line-height:25px;">3.04</div><div class="t" style="left:819px;top:474px;width:72px;height:25px;line-height:25px;">2.75</div><div class="t" style="left:892px;top:474px;width:38px;height:25px;line-height:25px;"><span style="color:#1c1cbb">负</span></div><div class="t" style="left:931px;top:474px;width:38px;height:25px;line-height:25px;"><span style="color:#1c1cbb">输</span></div><div class="t" style="left:970px;top:474px;width:58px;height:25px;line-height:25px;"><span style="color:#dd2211">大</span></div><div style="left:1px;top:498px;width:1028px;height:1px;background:#bebebe;"></div><div style="left:1px;top:499px;width:1028px;height:25px;background:#fff;"></div><div style="left:502px;top:499px;width:187px;height:25px;background:#fdf8f4;"></div><div style="left:690px;top:499px;width:201px;height:25px;background:#f0f6fb;"></div><div style="left:2px;top:499px;width:80px;height:25px;background:#36bb5a;"></div><div class="t" style="left:2px;top:500px;width:80px;height:25px;line-height:25px;color:#fff;">亚洲杯</div><div class="t" style="left:83px;top:500px;width:77px;height:25px;line-height:25px;">25-03-25</div><div class="t" style="left:161px;top:500px;width:113px;height:25px;line-height:25px;"><span style="color:#157a15">中国台湾</span></div><div class="t" style="left:275px;top:500px;width:91px;height:25px;line-height:25px;"><span style="color:#bb0f2d">1-2</span>(0-0)</div><div class="t" style="left:367px;top:500px;width:39px;height:25px;line-height:25px;">3-0</div><div class="t" style="left:407px;top:500px;width:94px;height:25px;line-height:25px;">土库曼斯坦</div><div class="t" style="left:502px;top:500px;width:39px;height:25px;line-height:25px;">0.79</div><div class="t" style="left:542px;top:500px;width:105px;height:25px;line-height:25px;">受半球</div><div class="t" style="left:648px;top:500px;width:41px;height:25px;line-height:25px;">1.03</div><div class="t" style="left:690px;top:500px;width:71px;height:25px;line-height:25px;">3.16</div><div class="t" style="left:762px;top:500px;width:56px;height:25px;line-height:25px;">3.30</div><div class="t" style="left:819px;top:500px;width:72px;height:25px;line-height:25px;">2.11</div><div class="t" style="left:892px;top:500px;width:38px;height:25px;line-height:25px;"><span style="color:#1c1cbb">负</span></div><div class="t" style="left:931px;top:500px;width:38px;height:25px;line-height:25px;"><span style="color:#1c1cbb">输</span></div><div class="t" style="left:970px;top:500px;width:58px;height:25px;line-height:25px;"><span style="color:#dd2211">大</span></div><div style="left:1px;top:524px;width:1028px;height:1px;background:#bebebe;"></div><div style="left:1px;top:525px;width:1028px;height:25px;background:#f0f0f0;"></div><div style="left:502px;top:525px;width:187px;height:25px;background:#fdf8f4;"></div><div style="left:690px;top:525px;width:201px;height:25px;background:#f0f6fb;"></div><div style="left:2px;top:525px;width:80px;height:25px;background:#ff5a5a;"></div><div class="t" style="left:2px;top:526px;width:80px;height:25px;line-height:25px;color:#fff;">东亚杯</div><div class="t" style="left:83px;top:526px;width:77px;height:25px;line-height:25px;">24-12-14</div><div class="t" style="left:161px;top:526px;width:113px;height:25px;line-height:25px;">中国香港</div><div class="t" style="left:275px;top:526px;width:91px;height:25px;line-height:25px;"><span style="color:#bb0f2d">2-1</span>(1-1)</div><div class="t" style="left:367px;top:526px;width:39px;height:25px;line-height:25px;">5-2</div><div class="t" style="left:407px;top:526px;width:94px;height:25px;line-height:25px;"><span style="color:#157a15">中国台湾</span></div><div class="t" style="left:502px;top:526px;width:39px;height:25px;line-height:25px;">0.81</div><div class="t" style="left:542px;top:526px;width:105px;height:25px;line-height:25px;">半/一</div><div class="t" style="left:648px;top:526px;width:41px;height:25px;line-height:25px;">0.95</div><div class="t" style="left:690px;top:526px;width:71px;height:25px;line-height:25px;">1.65</div><div class="t" style="left:762px;top:526px;width:56px;height:25px;line-height:25px;">3.76</div><div class="t" style="left:819px;top:526px;width:72px;height:25px;line-height:25px;">4.47</div><div class="t" style="left:892px;top:526px;width:38px;height:25px;line-height:25px;"><span style="color:#1c1cbb">负</span></div><div class="t" style="left:931px;top:526px;width:38px;height:25px;line-height:25px;"><span style="color:#1c1cbb">输</span></div><div class="t" style="left:970px;top:526px;width:58px;height:25px;line-height:25px;"><span style="color:#dd2211">大</span></div><div style="left:1px;top:550px;width:1028px;height:1px;background:#bebebe;"></div><div style="left:1px;top:551px;width:1028px;height:25px;background:#fff;"></div><div style="left:502px;top:551px;width:187px;height:25px;background:#fdf8f4;"></div><div style="left:690px;top:551px;width:201px;height:25px;background:#f0f6fb;"></div><div style="left:2px;top:551px;width:80px;height:25px;background:#ff5a5a;"></div><div class="t" style="left:2px;top:552px;width:80px;height:25px;line-height:25px;color:#fff;">东亚杯</div><div class="t" style="left:83px;top:552px;width:77px;height:25px;line-height:25px;">24-12-11</div><div class="t" style="left:161px;top:552px;width:113px;height:25px;line-height:25px;"><span style="color:#157a15">中国台湾(中)</span></div><div class="t" style="left:275px;top:552px;width:91px;height:25px;line-height:25px;"><span style="color:#bb0f2d">4-0</span>(1-0)</div><div class="t" style="left:367px;top:552px;width:39px;height:25px;line-height:25px;">12-2</div><div class="t" style="left:407px;top:552px;width:94px;height:25px;line-height:25px;">蒙古</div><div class="t" style="left:502px;top:552px;width:39px;height:25px;line-height:25px;">0.75</div><div class="t" style="left:542px;top:552px;width:105px;height:25px;line-height:25px;">两球半/三</div><div class="t" style="left:648px;top:552px;width:41px;height:25px;line-height:25px;">1.07</div><div class="t" style="left:690px;top:552px;width:71px;height:25px;line-height:25px;">1.08</div><div class="t" style="left:762px;top:552px;width:56px;height:25px;line-height:25px;">8.84</div><div class="t" style="left:819px;top:552px;width:72px;height:25px;line-height:25px;">18.15</div><div class="t" style="left:892px;top:552px;width:38px;height:25px;line-height:25px;"><span style="color:#dd2211">胜</span></div><div class="t" style="left:931px;top:552px;width:38px;height:25px;line-height:25px;"><span style="color:#dd2211">赢</span></div><div class="t" style="left:970px;top:552px;width:58px;height:25px;line-height:25px;"><span style="color:#118811">走</span></div><div style="left:1px;top:576px;width:1028px;height:1px;background:#bebebe;"></div><div style="left:1px;top:577px;width:1028px;height:25px;background:#f0f0f0;"></div><div style="left:502px;top:577px;width:187px;height:25px;background:#fdf8f4;"></div><div style="left:690px;top:577px;width:201px;height:25px;background:#f0f6fb;"></div><div style="left:2px;top:577px;width:80px;height:25px;background:#4666bb;"></div><div class="t" style="left:2px;top:578px;width:80px;height:25px;line-height:25px;color:#fff;">国际友谊</div><div class="t" style="left:83px;top:578px;width:77px;height:25px;line-height:25px;">24-11-18</div><div class="t" style="left:161px;top:578px;width:113px;height:25px;line-height:25px;">新加坡</div><div class="t" style="left:275px;top:578px;width:91px;height:25px;line-height:25px;"><span style="color:#bb0f2d">2-3</span>(0-1)</div><div class="t" style="left:367px;top:578px;width:39px;height:25px;line-height:25px;">5-1</div><div class="t" style="left:407px;top:578px;width:94px;height:25px;line-height:25px;"><span style="color:#157a15">中国台湾</span></div><div class="t" style="left:502px;top:578px;width:39px;height:25px;line-height:25px;">0.89</div><div class="t" style="left:542px;top:578px;width:105px;height:25px;line-height:25px;">半/一</div><div class="t" style="left:648px;top:578px;width:41px;height:25px;line-height:25px;">0.93</div><div class="t" style="left:690px;top:578px;width:71px;height:25px;line-height:25px;">1.70</div><div class="t" style="left:762px;top:578px;width:56px;height:25px;line-height:25px;">3.99</div><div class="t" style="left:819px;top:578px;width:72px;height:25px;line-height:25px;">4.07</div><div class="t" style="left:892px;top:578px;width:38px;height:25px;line-height:25px;"><span style="color:#dd2211">胜</span></div><div class="t" style="left:931px;top:578px;width:38px;height:25px;line-height:25px;"><span style="color:#dd2211">赢</span></div><div class="t" style="left:970px;top:578px;width:58px;height:25px;line-height:25px;"><span style="color:#dd2211">大</span></div><div style="left:1px;top:602px;width:1028px;height:1px;background:#bebebe;"></div><div style="left:1px;top:603px;width:1028px;height:25px;background:#fff;"></div><div style="left:502px;top:603px;width:187px;height:25px;background:#fdf8f4;"></div><div style="left:690px;top:603px;width:201px;height:25px;background:#f0f6fb;"></div><div style="left:2px;top:603px;width:80px;height:25px;background:#4666bb;"></div><div class="t" style="left:2px;top:604px;width:80px;height:25px;line-height:25px;color:#fff;">国际友谊</div><div class="t" style="left:83px;top:604px;width:77px;height:25px;line-height:25px;">24-10-11</div><div class="t" style="left:161px;top:604px;width:113px;height:25px;line-height:25px;">柬埔寨</div><div class="t" style="left:275px;top:604px;width:91px;height:25px;line-height:25px;"><span style="color:#bb0f2d">3-2</span>(0-1)</div><div class="t" style="left:367px;top:604px;width:39px;height:25px;line-height:25px;">9-5</div><div class="t" style="left:407px;top:604px;width:94px;height:25px;line-height:25px;"><span style="color:#157a15">中国台湾</span></div><div class="t" style="left:502px;top:604px;width:39px;height:25px;line-height:25px;">1.02</div><div class="t" style="left:542px;top:604px;width:105px;height:25px;line-height:25px;">半球</div><div class="t" style="left:648px;top:604px;width:41px;height:25px;line-height:25px;">0.80</div><div class="t" style="left:690px;top:604px;width:71px;height:25px;line-height:25px;">2.06</div><div class="t" style="left:762px;top:604px;width:56px;height:25px;line-height:25px;">3.22</div><div class="t" style="left:819px;top:604px;width:72px;height:25px;line-height:25px;">3.47</div><div class="t" style="left:892px;top:604px;width:38px;height:25px;line-height:25px;"><span style="color:#1c1cbb">负</span></div><div class="t" style="left:931px;top:604px;width:38px;height:25px;line-height:25px;"><span style="color:#1c1cbb">输</span></div><div class="t" style="left:970px;top:604px;width:58px;height:25px;line-height:25px;"><span style="color:#dd2211">大</span></div><div style="left:1px;top:628px;width:1028px;height:1px;background:#bebebe;"></div><div style="left:1px;top:629px;width:1028px;height:25px;background:#f0f0f0;"></div><div style="left:502px;top:629px;width:187px;height:25px;background:#fdf8f4;"></div><div style="left:690px;top:629px;width:201px;height:25px;background:#f0f6fb;"></div><div style="left:2px;top:629px;width:80px;height:25px;background:#46a046;"></div><div class="t" style="left:2px;top:630px;width:80px;height:25px;line-height:25px;color:#fff;">亚洲预选</div><div class="t" style="left:83px;top:630px;width:77px;height:25px;line-height:25px;">24-06-11</div><div class="t" style="left:161px;top:630px;width:113px;height:25px;line-height:25px;">马来西亚</div><div class="t" style="left:275px;top:630px;width:91px;height:25px;line-height:25px;"><span style="color:#bb0f2d">3-1</span>(0-1)</div><div class="t" style="left:367px;top:630px;width:39px;height:25px;line-height:25px;">7-1</div><div class="t" style="left:407px;top:630px;width:94px;height:25px;line-height:25px;"><span style="color:#157a15">中国台湾</span></div><div class="t" style="left:502px;top:630px;width:39px;height:25px;line-height:25px;">0.92</div><div class="t" style="left:542px;top:630px;width:105px;height:25px;line-height:25px;">两球半</div><div class="t" style="left:648px;top:630px;width:41px;height:25px;line-height:25px;">0.90</div><div class="t" style="left:690px;top:630px;width:71px;height:25px;line-height:25px;">1.08</div><div class="t" style="left:762px;top:630px;width:56px;height:25px;line-height:25px;">9.52</div><div class="t" style="left:819px;top:630px;width:72px;height:25px;line-height:25px;">19.88</div><div class="t" style="left:892px;top:630px;width:38px;height:25px;line-height:25px;"><span style="color:#1c1cbb">负</span></div><div class="t" style="left:931px;top:630px;width:38px;height:25px;line-height:25px;"><span style="color:#dd2211">赢</span></div><div class="t" style="left:970px;top:630px;width:58px;height:25px;line-height:25px;"><span style="color:#dd2211">大</span></div><div style="left:1px;top:654px;width:1028px;height:1px;background:#bebebe;"></div><div style="left:1px;top:655px;width:1028px;height:25px;background:#fff;"></div><div style="left:502px;top:655px;width:187px;height:25px;background:#fdf8f4;"></div><div style="left:690px;top:655px;width:201px;height:25px;background:#f0f6fb;"></div><div style="left:2px;top:655px;width:80px;height:25px;background:#46a046;"></div><div class="t" style="left:2px;top:656px;width:80px;height:25px;line-height:25px;color:#fff;">亚洲预选</div><div class="t" style="left:83px;top:656px;width:77px;height:25px;line-height:25px;">24-06-06</div><div class="t" style="left:161px;top:656px;width:113px;height:25px;line-height:25px;"><span style="color:#157a15">中国台湾</span></div><div class="t" style="left:275px;top:656px;width:91px;height:25px;line-height:25px;"><span style="color:#bb0f2d">0-3</span>(0-1)</div><div class="t" style="left:367px;top:656px;width:39px;height:25px;line-height:25px;">4-3</div><div class="t" style="left:407px;top:656px;width:94px;height:25px;line-height:25px;">阿曼</div><div class="t" style="left:502px;top:656px;width:39px;height:25px;line-height:25px;">0.85</div><div class="t" style="left:542px;top:656px;width:105px;height:25px;line-height:25px;">受两/两球半</div><div class="t" style="left:648px;top:656px;width:41px;height:25px;line-height:25px;">0.97</div><div class="t" style="left:690px;top:656px;width:71px;height:25px;line-height:25px;">16.73</div><div class="t" style="left:762px;top:656px;width:56px;height:25px;line-height:25px;">8.26</div><div class="t" style="left:819px;top:656px;width:72px;height:25px;line-height:25px;">1.11</div><div class="t" style="left:892px;top:656px;width:38px;height:25px;line-height:25px;"><span style="color:#1c1cbb">负</span></div><div class="t" style="left:931px;top:656px;width:38px;height:25px;line-height:25px;"><span style="color:#1c1cbb">输</span></div><div class="t" style="left:970px;top:656px;width:58px;height:25px;line-height:25px;"><span style="color:#1c1cbb">小</span></div><div style="left:1px;top:680px;width:1028px;height:1px;background:#bebebe;"></div><div style="left:1px;top:681px;width:1028px;height:25px;background:#f0f0f0;"></div><div style="left:502px;top:681px;width:187px;height:25px;background:#fdf8f4;"></div><div style="left:690px;top:681px;width:201px;height:25px;background:#f0f6fb;"></div><div style="left:2px;top:681px;width:80px;height:25px;background:#46a046;"></div><div class="t" style="left:2px;top:682px;width:80px;height:25px;line-height:25px;color:#fff;">亚洲预选</div><div class="t" style="left:83px;top:682px;width:77px;height:25px;line-height:25px;">24-03-26</div><div class="t" style="left:161px;top:682px;width:113px;height:25px;line-height:25px;">吉尔吉斯斯坦</div><div class="t" style="left:275px;top:682px;width:91px;height:25px;line-height:25px;"><span style="color:#bb0f2d">5-1</span>(3-0)</div><div class="t" style="left:367px;top:682px;width:39px;height:25px;line-height:25px;">8-8</div><div class="t" style="left:407px;top:682px;width:94px;height:25px;line-height:25px;"><span style="color:#157a15">中国台湾</span></div><div class="t" style="left:502px;top:682px;width:39px;height:25px;line-height:25px;">0.90</div><div class="t" style="left:542px;top:682px;width:105px;height:25px;line-height:25px;">两/两球半</div><div class="t" style="left:648px;top:682px;width:41px;height:25px;line-height:25px;">0.92</div><div class="t" style="left:690px;top:682px;width:71px;height:25px;line-height:25px;">1.09</div><div class="t" style="left:762px;top:682px;width:56px;height:25px;line-height:25px;">8.18</div><div class="t" style="left:819px;top:682px;width:72px;height:25px;line-height:25px;">24.74</div><div class="t" style="left:892px;top:682px;width:38px;height:25px;line-height:25px;"><span style="color:#1c1cbb">负</span></div><div class="t" style="left:931px;top:682px;width:38px;height:25px;line-height:25px;"><span style="color:#1c1cbb">输</span></div><div class="t" style="left:970px;top:682px;width:58px;height:25px;line-height:25px;"><span style="color:#dd2211">大</span></div><div style="left:1px;top:706px;width:1028px;height:1px;background:#bebebe;"></div><div style="left:1px;top:446px;width:1px;height:260px;background:#bebebe;"></div><div style="left:82px;top:446px;width:1px;height:260px;background:#bebebe;"></div><div style="left:160px;top:446px;width:1px;height:260px;background:#bebebe;"></div><div style="left:274px;top:446px;width:1px;height:260px;background:#bebebe;"></div><div style="left:366px;top:446px;width:1px;height:260px;background:#bebebe;"></div><div style="left:406px;top:446px;width:1px;height:260px;background:#bebebe;"></div><div style="left:501px;top:446px;width:1px;height:260px;background:#bebebe;"></div><div style="left:541px;top:446px;width:1px;height:260px;background:#bebebe;"></div><div style="left:647px;top:446px;width:1px;height:260px;background:#bebebe;"></div><div style="left:689px;top:446px;width:1px;height:260px;background:#bebebe;"></div><div style="left:761px;top:446px;width:1px;height:260px;background:#bebebe;"></div><div style="left:818px;top:446px;width:1px;height:260px;background:#bebebe;"></div><div style="left:891px;top:446px;width:1px;height:260px;background:#bebebe;"></div><div style="left:930px;top:446px;width:1px;height:260px;background:#bebebe;"></div><div style="left:969px;top:446px;width:1px;height:260px;background:#bebebe;"></div><div style="left:1028px;top:446px;width:1px;height:260px;background:#bebebe;"></div><div style="left:1px;top:707px;width:1028px;height:25px;background:#fff;"></div><div class="t" style="left:2px;top:708px;width:1026px;height:25px;line-height:25px;color:#333;letter-spacing:0.18px;">近<span style="color:#d2321e">10</span>场,胜2平0负8, 胜率:<span style="color:#d2321e">20%</span> 让胜率:<span style="color:#d2321e">30%</span> 大率:<span style="color:#d2321e">80%</span> 单率:<span style="color:#d2321e">50%</span></div><div style="left:1px;top:706px;width:1px;height:26px;background:#bebebe;"></div><div style="left:1028px;top:706px;width:1px;height:26px;background:#bebebe;"></div><div style="left:1px;top:732px;width:1028px;height:1px;background:#bebebe;"></div>
</body></html>
